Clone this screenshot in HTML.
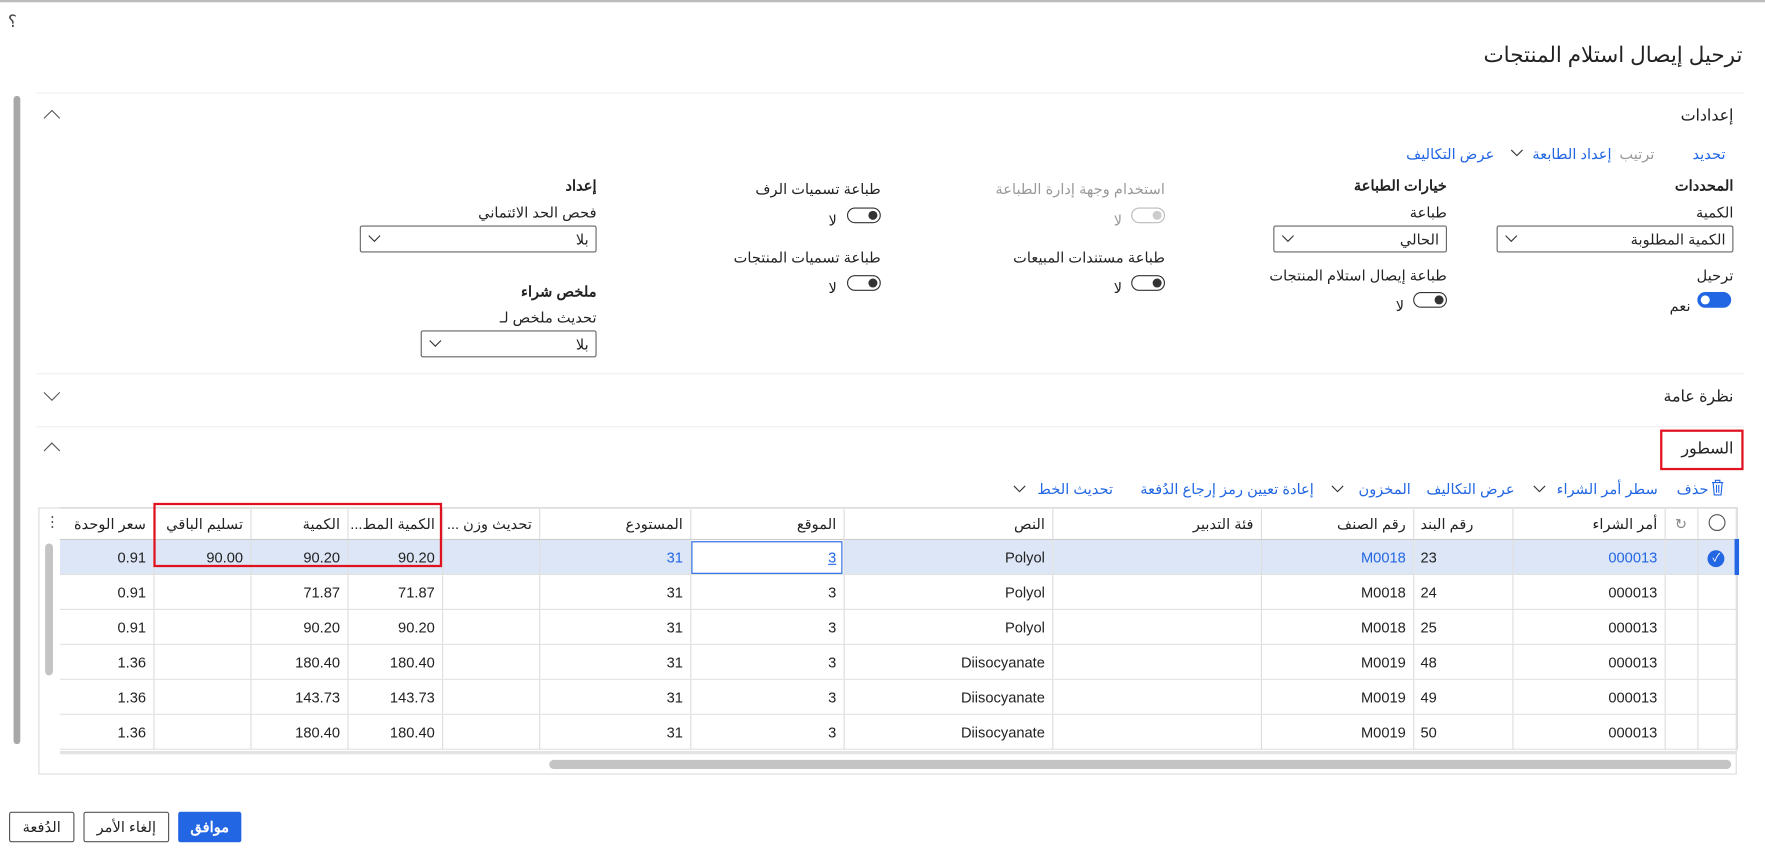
<!DOCTYPE html>
<html><head><meta charset="utf-8">
<style>
html,body{margin:0;padding:0;background:#fff;width:1765px;height:849px;overflow:hidden}
#w{position:absolute;left:0;top:0;width:1565px;height:753px;transform:scale(1.1278,1.1275);transform-origin:0 0;font-family:"Liberation Sans","Noto Sans CJK SC",sans-serif;font-size:13px;color:#222}
.t{position:absolute;white-space:nowrap;direction:rtl}
.b{font-weight:bold}
.g{color:#999}
.lk{color:#2266e3}
.dd{position:absolute;height:24px;border:1px solid #666;border-radius:2px;background:#fff;box-sizing:border-box}
.dd span{position:absolute;right:6px;top:4px;direction:rtl}
.dd svg{position:absolute;left:6px;top:7px}
.tg{position:absolute;width:30px;height:14px;border:1px solid #333;border-radius:8px;box-sizing:border-box}
.tg i{position:absolute;right:2px;top:2px;width:8px;height:8px;border-radius:50%;background:#333}
.line{position:absolute;height:1px;background:#eee}
table{position:absolute;left:53px;top:450px;width:1487px;border-collapse:collapse;table-layout:fixed;font-size:13px}
td,th{border-right:1px solid #ddd;border-bottom:1px solid #e2e2e2;padding:0 6px;text-align:right;direction:rtl;white-space:nowrap;overflow:hidden;font-weight:normal;box-sizing:border-box}
th{height:28px;border-top:1px solid #ccc;border-bottom:1px solid #ccc;color:#222}
td{height:31px}
tr.sel td{background:#dce6f7}
.btn{position:absolute;top:720px;height:27px;border:1px solid #555;border-radius:2px;box-sizing:border-box;font-size:13px;text-align:center;line-height:25px;direction:rtl}
</style></head><body><div id="w">
<div style="position:absolute;left:0;top:0;width:1565px;height:2px;background:#bbb"></div>
<div class="t" style="left:7px;top:10px;font-size:15px;color:#444">؟</div>
<div class="t" style="right:20px;top:38px;font-size:19px">ترحيل إيصال استلام المنتجات</div>
<div style="position:absolute;left:12px;top:85px;width:6px;height:575px;background:#a8a8a8;border-radius:3px"></div>
<div class="line" style="left:32px;top:82px;width:1515px"></div>
<svg style="position:absolute;left:38px;top:97px" width="16" height="10"><path d="M1 8 L8 1 L15 8" fill="none" stroke="#555" stroke-width="1"/></svg>
<div class="t" style="right:28px;top:94px;font-size:14px">إعدادات</div>
<div class="t lk" style="right:35px;top:129px">تحديد</div>
<div class="t g" style="right:98px;top:129px">ترتيب</div>
<div class="t lk" style="right:136px;top:129px">إعداد الطابعة</div>
<svg style="position:absolute;left:1339px;top:132px" width="12" height="8"><path d="M1 1 L6 6 L11 1" fill="none" stroke="#333"/></svg>
<div class="t lk" style="right:240px;top:129px">عرض التكاليف</div>

<div class="t b" style="right:28px;top:157px">المحددات</div>
<div class="t" style="right:28px;top:181px">الكمية</div>
<div class="dd" style="left:1327px;top:200px;width:210px"><span>الكمية المطلوبة</span><svg width="12" height="8"><path d="M1 1 L6 6 L11 1" fill="none" stroke="#333"/></svg></div>
<div class="t" style="right:28px;top:237px">ترحيل</div>
<div class="tg" style="left:1505px;top:259px;background:#2266e3;border-color:#2266e3"><i style="background:#fff;right:auto;left:2px"></i></div>
<div class="t" style="right:66px;top:264px">نعم</div>

<div class="t b" style="right:282px;top:157px">خيارات الطباعة</div>
<div class="t" style="right:282px;top:181px">طباعة</div>
<div class="dd" style="left:1129px;top:200px;width:154px"><span>الحالي</span><svg width="12" height="8"><path d="M1 1 L6 6 L11 1" fill="none" stroke="#333"/></svg></div>
<div class="t" style="right:282px;top:237px">طباعة إيصال استلام المنتجات</div>
<div class="tg" style="left:1253px;top:259px"><i></i></div>
<div class="t" style="right:320px;top:264px">لا</div>

<div class="t g" style="right:532px;top:160px">استخدام وجهة إدارة الطباعة</div>
<div class="tg" style="left:1003px;top:184px;border-color:#bbb"><i style="background:#ccc"></i></div>
<div class="t g" style="right:570px;top:188px">لا</div>
<div class="t" style="right:532px;top:221px">طباعة مستندات المبيعات</div>
<div class="tg" style="left:1003px;top:244px"><i></i></div>
<div class="t" style="right:570px;top:248px">لا</div>

<div class="t" style="right:784px;top:160px">طباعة تسميات الرف</div>
<div class="tg" style="left:751px;top:184px"><i></i></div>
<div class="t" style="right:823px;top:188px">لا</div>
<div class="t" style="right:784px;top:221px">طباعة تسميات المنتجات</div>
<div class="tg" style="left:751px;top:244px"><i></i></div>
<div class="t" style="right:823px;top:248px">لا</div>

<div class="t b" style="right:1036px;top:157px">إعداد</div>
<div class="t" style="right:1036px;top:181px">فحص الحد الائتماني</div>
<div class="dd" style="left:319px;top:200px;width:210px"><span>بلا</span><svg width="12" height="8"><path d="M1 1 L6 6 L11 1" fill="none" stroke="#333"/></svg></div>
<div class="t b" style="right:1036px;top:251px">ملخص شراء</div>
<div class="t" style="right:1036px;top:274px">تحديث ملخص لـ</div>
<div class="dd" style="left:373px;top:293px;width:156px"><span>بلا</span><svg width="12" height="8"><path d="M1 1 L6 6 L11 1" fill="none" stroke="#333"/></svg></div>

<div class="line" style="left:32px;top:331px;width:1515px"></div>
<svg style="position:absolute;left:38px;top:347px" width="16" height="10"><path d="M1 1 L8 8 L15 1" fill="none" stroke="#555"/></svg>
<div class="t" style="right:28px;top:343px;font-size:14px">نظرة عامة</div>
<div class="line" style="left:32px;top:378px;width:1515px"></div>
<svg style="position:absolute;left:38px;top:392px" width="16" height="10"><path d="M1 8 L8 1 L15 8" fill="none" stroke="#555"/></svg>
<div style="position:absolute;left:1472px;top:381px;width:74px;height:36px;border:2px solid #e0121f;box-sizing:border-box"></div>
<div class="t" style="right:28px;top:389px;font-size:14px">السطور</div>

<svg style="position:absolute;left:1517px;top:425px" width="12" height="15"><path d="M1 3 H11 M4 3 V1 H8 V3 M2 3 L3 14 H9 L10 3 M5 5 V12 M7 5 V12" fill="none" stroke="#2266e3"/></svg>
<div class="t lk" style="right:50px;top:426px">حذف</div>
<div class="t lk" style="right:95px;top:426px">سطر أمر الشراء</div>
<svg style="position:absolute;left:1359px;top:430px" width="12" height="8"><path d="M1 1 L6 6 L11 1" fill="none" stroke="#333"/></svg>
<div class="t lk" style="right:222px;top:426px">عرض التكاليف</div>
<div class="t lk" style="right:314px;top:426px">المخزون</div>
<svg style="position:absolute;left:1180px;top:430px" width="12" height="8"><path d="M1 1 L6 6 L11 1" fill="none" stroke="#333"/></svg>
<div class="t lk" style="right:400px;top:426px">إعادة تعيين رمز إرجاع الدُفعة</div>
<div class="t lk" style="right:578px;top:426px">تحديث الخط</div>
<svg style="position:absolute;left:898px;top:430px" width="12" height="8"><path d="M1 1 L6 6 L11 1" fill="none" stroke="#333"/></svg>

<div style="position:absolute;left:34px;top:450px;width:1506px;height:237px;border:1px solid #ddd;box-sizing:border-box"></div>
<table>
<colgroup><col style="width:83px"><col style="width:86px"><col style="width:86px"><col style="width:84px"><col style="width:86px"><col style="width:134px"><col style="width:136px"><col style="width:185px"><col style="width:185px"><col style="width:135px"><col style="width:88px"><col style="width:135px"><col style="width:29px"><col style="width:35px"></colgroup>
<tr><th>سعر الوحدة</th><th>تسليم الباقي</th><th>الكمية</th><th>الكمية المط...</th><th>تحديث وزن ...</th><th>المستودع</th><th>الموقع</th><th>النص</th><th>فئة التدبير</th><th>رقم الصنف</th><th style="text-align:left">رقم البند</th><th>أمر الشراء</th><th style="text-align:center;color:#888;padding:0">↻</th><th style="text-align:center;padding:0"><span style="display:inline-block;width:13px;height:13px;border:1px solid #555;border-radius:50%"></span></th></tr>
<tr class="sel"><td>0.91</td><td>90.00</td><td>90.20</td><td>90.20</td><td></td><td class="lk">31</td><td style="background:#fff;outline:1px solid #2266e3;outline-offset:-2px"><u class="lk">3</u></td><td>Polyol</td><td></td><td class="lk">M0018</td><td style="text-align:left">23</td><td class="lk">000013</td><td></td><td style="text-align:center;padding:0;border-right:4px solid #2266e3"><span style="display:inline-block;width:15px;height:15px;border-radius:50%;background:#2266e3;color:#fff;font-size:10px;line-height:15px">✓</span></td></tr>
<tr><td>0.91</td><td></td><td>71.87</td><td>71.87</td><td></td><td>31</td><td>3</td><td>Polyol</td><td></td><td>M0018</td><td style="text-align:left">24</td><td>000013</td><td></td><td></td></tr>
<tr><td>0.91</td><td></td><td>90.20</td><td>90.20</td><td></td><td>31</td><td>3</td><td>Polyol</td><td></td><td>M0018</td><td style="text-align:left">25</td><td>000013</td><td></td><td></td></tr>
<tr><td>1.36</td><td></td><td>180.40</td><td>180.40</td><td></td><td>31</td><td>3</td><td>Diisocyanate</td><td></td><td>M0019</td><td style="text-align:left">48</td><td>000013</td><td></td><td></td></tr>
<tr><td>1.36</td><td></td><td>143.73</td><td>143.73</td><td></td><td>31</td><td>3</td><td>Diisocyanate</td><td></td><td>M0019</td><td style="text-align:left">49</td><td>000013</td><td></td><td></td></tr>
<tr><td>1.36</td><td></td><td>180.40</td><td>180.40</td><td></td><td>31</td><td>3</td><td>Diisocyanate</td><td></td><td>M0019</td><td style="text-align:left">50</td><td>000013</td><td></td><td></td></tr>
</table>
<div class="t" style="left:40px;top:455px;color:#555">⋮</div>
<div style="position:absolute;left:40px;top:482px;width:7px;height:117px;background:#c4c4c4;border-radius:4px"></div>
<div style="position:absolute;left:53px;top:666px;width:1487px;height:3px;background:#e4e4e4"></div>
<div style="position:absolute;left:487px;top:674px;width:1048px;height:8px;background:#c4c4c4;border-radius:4px"></div>
<div style="position:absolute;left:136px;top:446px;width:256px;height:57px;border:2px solid #e0121f;box-sizing:border-box"></div>

<div class="btn" style="left:8px;width:58px">الدُفعة</div>
<div class="btn" style="left:74px;width:76px">إلغاء الأمر</div>
<div class="btn b" style="left:158px;width:56px;background:#2266e3;border-color:#2266e3;color:#fff">موافق</div>
</div></body></html>
